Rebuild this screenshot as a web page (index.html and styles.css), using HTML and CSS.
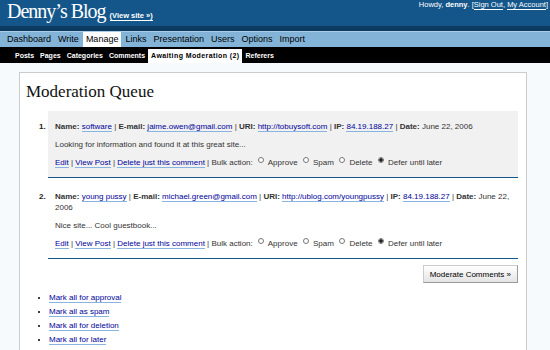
FILE: index.html
```html
<!DOCTYPE html>
<html lang="en">
<head>
  <meta charset="UTF-8">
  <title>Denny’s Blog › Moderation Queue</title>
  <link rel="stylesheet" href="styles.css">
</head>
<body>
  <div class="head">
    <h1>Denny’s Blog <a class="site" href="#">(View site »)</a></h1>
    <div class="user">Howdy, <b>denny</b>. [<a href="#">Sign Out</a>, <a href="#">My Account</a>]</div>
  </div>

  <ul class="nav">
    <li><a href="#">Dashboard</a></li>
    <li><a href="#">Write</a></li>
    <li class="current"><a href="#">Manage</a></li>
    <li><a href="#">Links</a></li>
    <li><a href="#">Presentation</a></li>
    <li><a href="#">Users</a></li>
    <li><a href="#">Options</a></li>
    <li><a href="#">Import</a></li>
  </ul>

  <ul class="sub">
    <li><a href="#">Posts</a></li>
    <li><a href="#">Pages</a></li>
    <li><a href="#">Categories</a></li>
    <li><a href="#">Comments</a></li>
    <li class="current"><a href="#">Awaiting Moderation (2)</a></li>
    <li><a href="#">Referers</a></li>
  </ul>

  <div class="wrap">
    <h2>Moderation Queue</h2>

    <ol class="comments">
      <li class="alt">
        <p><b>Name:</b> <a href="#">software</a> | <b>E-mail:</b> <a href="#">jaime.owen@gmail.com</a> | <b>URI:</b> <a href="#">http://tobuysoft.com</a> | <b>IP:</b> <a href="#">84.19.188.27</a> | <b>Date:</b> June 22, 2006</p>
        <p>Looking for information and found it at this great site...</p>
        <p><a href="#">Edit</a> | <a href="#">View Post</a> | <a href="#">Delete just this comment</a> | Bulk action:
          <input type="radio" name="c1"> Approve
          <input type="radio" name="c1"> Spam
          <input type="radio" name="c1"> Delete
          <input type="radio" name="c1" checked> Defer until later</p>
      </li>
      <li>
        <p><b>Name:</b> <a href="#">young pussy</a> | <b>E-mail:</b> <a href="#">michael.green@gmail.com</a> | <b>URI:</b> <a href="#">http://ublog.com/youngpussy</a> | <b>IP:</b> <a href="#">84.19.188.27</a> | <b>Date:</b> June 22, 2006</p>
        <p>Nice site... Cool guestbook...</p>
        <p><a href="#">Edit</a> | <a href="#">View Post</a> | <a href="#">Delete just this comment</a> | Bulk action:
          <input type="radio" name="c2"> Approve
          <input type="radio" name="c2"> Spam
          <input type="radio" name="c2"> Delete
          <input type="radio" name="c2" checked> Defer until later</p>
      </li>
    </ol>

    <div class="actions">
      <button type="button">Moderate Comments »</button>
    </div>

    <ul class="quick">
      <li><a href="#">Mark all for approval</a></li>
      <li><a href="#">Mark all as spam</a></li>
      <li><a href="#">Mark all for deletion</a></li>
      <li><a href="#">Mark all for later</a></li>
    </ul>
  </div>
</body>
</html>
```

FILE: styles.css
```css
body {
  margin: 0;
  background: #f7fafd;
  font-family: "Liberation Sans", Arial, sans-serif;
  font-size: 8px;
  color: #333;
}

a {
  color: #00019b;
  text-decoration: none;
  border-bottom: 1px solid #8ab4e0;
}

/* header */
.head {
  background: #14568a;
  height: 26px;
  display: flex;
  justify-content: space-between;
  align-items: flex-start;
  padding: 0 2px 0 7px;
  border-bottom: 5px solid #0d3a60;
}

.head h1 {
  margin: 0;
  font: normal 20px/22px "Liberation Serif", "Times New Roman", serif;
  letter-spacing: -1px;
  color: #fff;
}

.head .site {
  font: bold 7.5px "Liberation Sans", Arial, sans-serif;
  letter-spacing: 0;
  color: #fff;
  border-bottom-color: #fff;
}

.user {
  color: #fff;
  font-size: 7.5px;
  line-height: 10px;
}

.user a {
  color: #fff;
  border-bottom-color: #fff;
}

/* main menu */
.nav {
  list-style: none;
  margin: 0;
  padding: 0 0 0 4px;
  display: flex;
  background: #83b4d8;
  border-top: 1px solid #a9cde9;
  height: 15px;
}

.nav li {
  margin-right: 1px;
}

.nav a {
  display: block;
  padding: 0 3px;
  line-height: 15px;
  font-size: 9px;
  color: #000;
  border: 0;
}

.nav .current a {
  background: #fff;
}

/* sub menu */
.sub {
  list-style: none;
  margin: 0;
  padding: 0 0 0 12px;
  display: flex;
  align-items: flex-end;
  background: #000;
  height: 16px;
}

.sub a {
  display: block;
  padding: 0 3px;
  line-height: 14px;
  font-size: 7px;
  font-weight: bold;
  color: #fff;
  border: 0;
}

.sub .current a {
  background: #fff;
  color: #000;
  letter-spacing: 0.4px;
}

/* content */
.wrap {
  margin: 9px 23px 0 19px;
  background: #fff;
  border: 1px solid #ccc;
  border-bottom: 0;
  padding: 0 8px 20px 6px;
}

h2 {
  margin: 9px 0;
  font: normal 17px/20px "Liberation Serif", "Times New Roman", serif;
  color: #111;
}

.comments {
  margin: 0;
  padding: 0 0 0 22px;
}

.comments li {
  padding: 10px 7px 9px;
  border-bottom: 1px solid #14568a;
  margin-bottom: 3px;
}

.comments li::marker {
  font-weight: bold;
  color: #222;
}

.comments li.alt {
  background: #f1f1f1;
}

.comments p {
  margin: 0 0 7px;
  line-height: 11px;
}

.comments p:last-child {
  margin-bottom: 0;
}

.comments input {
  appearance: none;
  width: 6px;
  height: 6px;
  margin: 0 2px 0 3px;
  border: 1px solid #777;
  border-radius: 50%;
  background: #fff;
  vertical-align: 2px;
}

.comments input:checked {
  background: radial-gradient(circle, #222 1.5px, #fff 2px);
}

.actions {
  display: flex;
  justify-content: flex-end;
  margin-top: 6px;
}

.actions button {
  font: 8px "Liberation Sans", Arial, sans-serif;
  color: #000;
  height: 18px;
  padding: 0 6px;
  border: 1px solid #999;
  border-top-color: #ccc;
  border-left-color: #ccc;
  background: linear-gradient(#fff, #e4e4e4);
}

.quick {
  margin: 8px 0 0;
  padding-left: 23px;
  color: #000;
}

.quick li {
  line-height: 14px;
}
```
